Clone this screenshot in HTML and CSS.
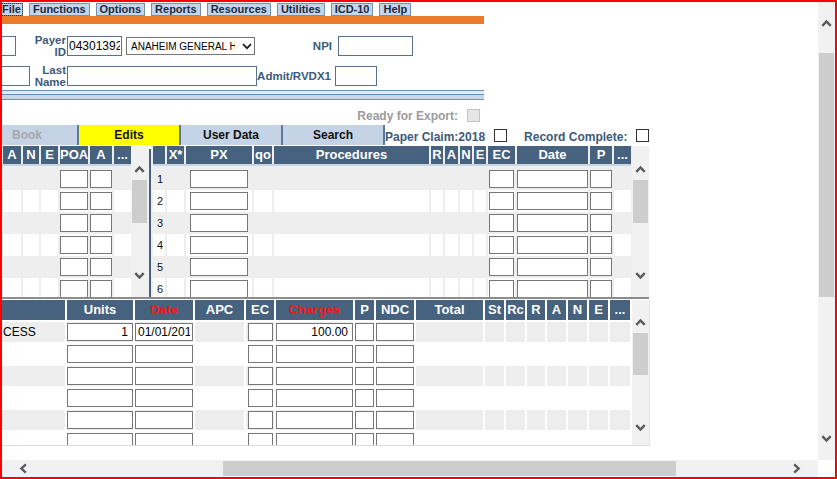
FILE: index.html
```html
<!DOCTYPE html>
<html lang="en">
<head>
<meta charset="utf-8">
<title>Claim Edit</title>
<link rel="stylesheet" href="styles.css">
</head>
<body>
<div class="frame">
  <main class="content">
    <nav class="menu">
      <span class="mbtn file">File</span>
      <span class="mbtn">Functions</span>
      <span class="mbtn">Options</span>
      <span class="mbtn">Reports</span>
      <span class="mbtn">Resources</span>
      <span class="mbtn">Utilities</span>
      <span class="mbtn">ICD-10</span>
      <span class="mbtn">Help</span>
    </nav>
    <div class="orange"></div>

    <div class="frow r1">
      <input class="inp frag1" type="text">
      <label class="lbl l-payer">Payer<br>ID</label>
      <input class="inp payer" type="text" value="04301392">
      <div class="sel">
        <span class="sel-text">ANAHEIM GENERAL H</span>
        <svg class="sel-chev" width="10" height="7" viewBox="0 0 10 7"><path d="M1 1.2 L5 5.2 L9 1.2" fill="none" stroke="#1a1a1a" stroke-width="1.7"/></svg>
      </div>
      <label class="lbl l-npi">NPI</label>
      <input class="inp npi" type="text">
    </div>

    <div class="frow r2">
      <input class="inp frag2" type="text">
      <label class="lbl l-last">Last<br>Name</label>
      <input class="inp lastname" type="text">
      <label class="lbl l-admit">Admit/RVDX1</label>
      <input class="inp admit" type="text">
    </div>

    <div class="rules"></div>

    <div class="ready">
      <span>Ready for Export:</span>
      <input class="cb cb-dis" type="checkbox" disabled>
    </div>

    <div class="tabrow">
      <div class="tabs">
        <span class="tab book">Book</span>
        <span class="tab edits">Edits</span>
        <span class="tab">User Data</span>
        <span class="tab">Search</span>
      </div>
      <span class="plbl">Paper Claim:2018</span>
      <input class="cb cb-paper" type="checkbox">
      <span class="plbl rc">Record Complete:</span>
      <input class="cb cb-rc" type="checkbox">
    </div>

    <section class="upper">
      <div class="blk blk-left">
        <div class="hrow gl">
          <div class="hc">A</div><div class="hc">N</div><div class="hc">E</div><div class="hc">POA</div><div class="hc">A</div><div class="hc">...</div>
        </div>
        <div class="rows">
          <div class="grow gl"><div class="c"></div><div class="c"></div><div class="c"></div><div class="c"><input class="ti"></div><div class="c"><input class="ti"></div><div class="c"></div></div>
          <div class="grow gl w"><div class="c"></div><div class="c"></div><div class="c"></div><div class="c"><input class="ti"></div><div class="c"><input class="ti"></div><div class="c"></div></div>
          <div class="grow gl"><div class="c"></div><div class="c"></div><div class="c"></div><div class="c"><input class="ti"></div><div class="c"><input class="ti"></div><div class="c"></div></div>
          <div class="grow gl w"><div class="c"></div><div class="c"></div><div class="c"></div><div class="c"><input class="ti"></div><div class="c"><input class="ti"></div><div class="c"></div></div>
          <div class="grow gl"><div class="c"></div><div class="c"></div><div class="c"></div><div class="c"><input class="ti"></div><div class="c"><input class="ti"></div><div class="c"></div></div>
          <div class="grow gl w"><div class="c"></div><div class="c"></div><div class="c"></div><div class="c"><input class="ti"></div><div class="c"><input class="ti"></div><div class="c"></div></div>
        </div>
      </div>
      <div class="iscroll up-scroll">
        <span class="arrow"><svg width="11" height="8" viewBox="0 0 11 8"><path d="M1.3 6.8 L5.5 2.4 L9.7 6.8" fill="none" stroke="#5a5a5a" stroke-width="2.4"/></svg></span>
        <span class="ithumb"></span>
        <span class="arrow down"><svg width="11" height="8" viewBox="0 0 11 8"><path d="M1.3 1.2 L5.5 5.6 L9.7 1.2" fill="none" stroke="#5a5a5a" stroke-width="2.4"/></svg></span>
      </div>
      <div class="vdiv"></div>
      <div class="blk blk-right">
        <div class="hrow gr">
          <div class="hc"></div><div class="hc">X*</div><div class="hc">PX</div><div class="hc">qo</div><div class="hc">Procedures</div><div class="hc">R</div><div class="hc">A</div><div class="hc">N</div><div class="hc">E</div><div class="hc">EC</div><div class="hc">Date</div><div class="hc">P</div><div class="hc">...</div>
        </div>
        <div class="rows">
          <div class="grow gr"><div class="c num">1</div><div class="c"></div><div class="c"><input class="ti px"></div><div class="c"></div><div class="c"></div><div class="c"></div><div class="c"></div><div class="c"></div><div class="c"></div><div class="c"><input class="ti ec"></div><div class="c"><input class="ti"></div><div class="c"><input class="ti"></div><div class="c"></div></div>
          <div class="grow gr w"><div class="c num">2</div><div class="c"></div><div class="c"><input class="ti px"></div><div class="c"></div><div class="c"></div><div class="c"></div><div class="c"></div><div class="c"></div><div class="c"></div><div class="c"><input class="ti ec"></div><div class="c"><input class="ti"></div><div class="c"><input class="ti"></div><div class="c"></div></div>
          <div class="grow gr"><div class="c num">3</div><div class="c"></div><div class="c"><input class="ti px"></div><div class="c"></div><div class="c"></div><div class="c"></div><div class="c"></div><div class="c"></div><div class="c"></div><div class="c"><input class="ti ec"></div><div class="c"><input class="ti"></div><div class="c"><input class="ti"></div><div class="c"></div></div>
          <div class="grow gr w"><div class="c num">4</div><div class="c"></div><div class="c"><input class="ti px"></div><div class="c"></div><div class="c"></div><div class="c"></div><div class="c"></div><div class="c"></div><div class="c"></div><div class="c"><input class="ti ec"></div><div class="c"><input class="ti"></div><div class="c"><input class="ti"></div><div class="c"></div></div>
          <div class="grow gr"><div class="c num">5</div><div class="c"></div><div class="c"><input class="ti px"></div><div class="c"></div><div class="c"></div><div class="c"></div><div class="c"></div><div class="c"></div><div class="c"></div><div class="c"><input class="ti ec"></div><div class="c"><input class="ti"></div><div class="c"><input class="ti"></div><div class="c"></div></div>
          <div class="grow gr w"><div class="c num">6</div><div class="c"></div><div class="c"><input class="ti px"></div><div class="c"></div><div class="c"></div><div class="c"></div><div class="c"></div><div class="c"></div><div class="c"></div><div class="c"><input class="ti ec"></div><div class="c"><input class="ti"></div><div class="c"><input class="ti"></div><div class="c"></div></div>
        </div>
      </div>
      <div class="iscroll up-scroll">
        <span class="arrow"><svg width="11" height="8" viewBox="0 0 11 8"><path d="M1.3 6.8 L5.5 2.4 L9.7 6.8" fill="none" stroke="#5a5a5a" stroke-width="2.4"/></svg></span>
        <span class="ithumb"></span>
        <span class="arrow down"><svg width="11" height="8" viewBox="0 0 11 8"><path d="M1.3 1.2 L5.5 5.6 L9.7 1.2" fill="none" stroke="#5a5a5a" stroke-width="2.4"/></svg></span>
      </div>
    </section>

    <section class="lower">
      <div class="lblk">
        <div class="lrow">
          <div class="hc"></div><div class="hc">Units</div><div class="hc red">Date</div><div class="hc">APC</div><div class="hc">EC</div><div class="hc red">Charges</div><div class="hc">P</div><div class="hc">NDC</div><div class="hc">Total</div><div class="hc">St</div><div class="hc">Rc</div><div class="hc">R</div><div class="hc">A</div><div class="hc">N</div><div class="hc">E</div><div class="hc">...</div>
        </div>
        <div class="lrow g"><div class="c txt">CESS</div><div class="c"><input class="ti rt" value="1"></div><div class="c"><input class="ti lt" value="01/01/2018"></div><div class="c"></div><div class="c"><input class="ti ec"></div><div class="c"><input class="ti rt" value="100.00"></div><div class="c"><input class="ti"></div><div class="c"><input class="ti"></div><div class="c"></div><div class="c"></div><div class="c"></div><div class="c"></div><div class="c"></div><div class="c"></div><div class="c"></div><div class="c"></div></div>
        <div class="lrow"><div class="c"></div><div class="c"><input class="ti"></div><div class="c"><input class="ti"></div><div class="c"></div><div class="c"><input class="ti ec"></div><div class="c"><input class="ti"></div><div class="c"><input class="ti"></div><div class="c"><input class="ti"></div><div class="c"></div><div class="c"></div><div class="c"></div><div class="c"></div><div class="c"></div><div class="c"></div><div class="c"></div><div class="c"></div></div>
        <div class="lrow g"><div class="c"></div><div class="c"><input class="ti"></div><div class="c"><input class="ti"></div><div class="c"></div><div class="c"><input class="ti ec"></div><div class="c"><input class="ti"></div><div class="c"><input class="ti"></div><div class="c"><input class="ti"></div><div class="c"></div><div class="c"></div><div class="c"></div><div class="c"></div><div class="c"></div><div class="c"></div><div class="c"></div><div class="c"></div></div>
        <div class="lrow"><div class="c"></div><div class="c"><input class="ti"></div><div class="c"><input class="ti"></div><div class="c"></div><div class="c"><input class="ti ec"></div><div class="c"><input class="ti"></div><div class="c"><input class="ti"></div><div class="c"><input class="ti"></div><div class="c"></div><div class="c"></div><div class="c"></div><div class="c"></div><div class="c"></div><div class="c"></div><div class="c"></div><div class="c"></div></div>
        <div class="lrow g"><div class="c"></div><div class="c"><input class="ti"></div><div class="c"><input class="ti"></div><div class="c"></div><div class="c"><input class="ti ec"></div><div class="c"><input class="ti"></div><div class="c"><input class="ti"></div><div class="c"><input class="ti"></div><div class="c"></div><div class="c"></div><div class="c"></div><div class="c"></div><div class="c"></div><div class="c"></div><div class="c"></div><div class="c"></div></div>
        <div class="lrow"><div class="c"></div><div class="c"><input class="ti"></div><div class="c"><input class="ti"></div><div class="c"></div><div class="c"><input class="ti ec"></div><div class="c"><input class="ti"></div><div class="c"><input class="ti"></div><div class="c"><input class="ti"></div><div class="c"></div><div class="c"></div><div class="c"></div><div class="c"></div><div class="c"></div><div class="c"></div><div class="c"></div><div class="c"></div></div>
      </div>
      <div class="iscroll low-scroll">
        <span class="arrow"><svg width="11" height="8" viewBox="0 0 11 8"><path d="M1.3 6.8 L5.5 2.4 L9.7 6.8" fill="none" stroke="#5a5a5a" stroke-width="2.4"/></svg></span>
        <span class="ithumb"></span>
        <span class="arrow down"><svg width="11" height="8" viewBox="0 0 11 8"><path d="M1.3 1.2 L5.5 5.6 L9.7 1.2" fill="none" stroke="#5a5a5a" stroke-width="2.4"/></svg></span>
      </div>
    </section>
  </main>

  <div class="vscroll">
    <span class="arrow"><svg width="11" height="8" viewBox="0 0 11 8"><path d="M1.3 6.8 L5.5 2.4 L9.7 6.8" fill="none" stroke="#5a5a5a" stroke-width="2.4"/></svg></span>
    <span class="vthumb"></span>
    <span class="arrow down"><svg width="11" height="8" viewBox="0 0 11 8"><path d="M1.3 1.2 L5.5 5.6 L9.7 1.2" fill="none" stroke="#5a5a5a" stroke-width="2.4"/></svg></span>
  </div>
  <div class="hscroll">
    <span class="arrow"><svg width="8" height="11" viewBox="0 0 8 11"><path d="M6.8 1.3 L2.4 5.5 L6.8 9.7" fill="none" stroke="#5a5a5a" stroke-width="2.4"/></svg></span>
    <span class="hthumb"></span>
    <span class="arrow right"><svg width="8" height="11" viewBox="0 0 8 11"><path d="M1.2 1.3 L5.6 5.5 L1.2 9.7" fill="none" stroke="#5a5a5a" stroke-width="2.4"/></svg></span>
  </div>
  <div class="corner"></div>
</div>
</body>
</html>
```

FILE: styles.css
```css
* { box-sizing: border-box; }
html, body { margin: 0; padding: 0; }
body {
  width: 837px; height: 479px; overflow: hidden; background: #fff;
  font-family: "Liberation Sans", Arial, sans-serif; color: #000;
}
.frame {
  width: 837px; height: 479px; border: 2px solid #ff0000;
  display: grid; grid-template-columns: 816px 17px; grid-template-rows: 458px 17px;
}
.content { overflow: hidden; background: #fff; }

/* menu */
.menu { display: flex; gap: 6px; height: 14px; padding-top: 1px; }
.mbtn {
  display: block; height: 13px; padding: 0 3px; border: 1px solid #7191b1;
  background: #c6d6ea; color: #1b2a3e; font-size: 11px; font-weight: bold;
  line-height: 11px; white-space: nowrap;
}
.mbtn.file { margin-left: -2px; padding: 0 1px; outline: 1px dotted #333; outline-offset: -1px; }
.orange { width: 482px; height: 8px; background: #ea7b28; }

/* header form */
.frow { display: flex; align-items: center; height: 20px; }
.r1 { margin-top: 12px; }
.r2 { margin-top: 10px; }
.inp {
  display: block; height: 20px; margin: 0; padding: 0 1px; border: 1px solid #56728f;
  border-radius: 0; background: #fff; font: 12px "Liberation Sans", Arial, sans-serif;
  color: #000; outline: none;
}
.lbl { font-weight: bold; font-size: 11.5px; line-height: 12px; color: #3c5a7a; white-space: nowrap; }
.frag1 { width: 14px; border-left: 0; }
.l-payer { width: 50px; text-align: right; }
.payer { width: 55px; margin-left: 1px; }
.sel {
  display: flex; align-items: center; width: 129px; height: 18px; margin-left: 4px;
  padding-left: 4px; border: 1px solid #767676; background: #fff; font-size: 10px; color: #000;
}
.sel-text { width: 104px; overflow: hidden; white-space: nowrap; }
.sel-chev { margin-left: auto; margin-right: 2px; }
.l-npi { width: 83px; text-align: right; padding-right: 6px; }
.npi { width: 75px; }
.frag2 { width: 28px; border-left: 0; }
.l-last { width: 36px; text-align: right; }
.lastname { width: 190px; margin-left: 1px; }
.l-admit { width: 78px; text-align: right; padding-right: 4px; }
.admit { width: 42px; }

.rules {
  width: 482px; height: 10px; margin-top: 4px;
  background: linear-gradient(to bottom, #6f8fb1 0 1px, #e2e9f2 1px 4px, #6f8fb1 4px 5px, #c8d6e6 5px 9px, #6f8fb1 9px 10px);
}

.ready {
  width: 482px; height: 13px; margin-top: 9px; padding-right: 4px;
  display: flex; justify-content: flex-end; align-items: center; gap: 9px;
  font-size: 12px; font-weight: bold; color: #9b9b9b;
}
.cb {
  appearance: none; -webkit-appearance: none; display: block; width: 13px; height: 13px; margin: 0;
  border: 1px solid #333; background: #fff; border-radius: 0;
}
.cb-dis { border-color: #c4c4c4; background: #e6e6e6; }

/* tabs */
.tabrow { display: flex; align-items: center; height: 20px; margin-top: 3px; }
.tabs { display: flex; height: 20px; }
.tab {
  display: block; width: 102px; height: 20px; border-right: 2px solid #5b7a98;
  background: #c5d3e6; font-size: 12px; font-weight: bold; line-height: 20px;
  text-align: center; color: #111; white-space: nowrap;
}
.tab.book { margin-left: -25px; color: #a7a7a7; }
.tab.edits { background: #ffff00; }
.plbl { font-size: 12px; font-weight: bold; color: #3c5a7a; padding-top: 3px; white-space: nowrap; }
.cb-paper { margin-left: 9px; }
.plbl.rc { margin-left: 17px; }
.cb-rc { margin-left: 9px; }

/* upper grids */
.upper {
  display: flex; width: 647px; height: 153px; margin-top: 1px;
  border-bottom: 2px solid #8c8c8c; overflow: hidden;
}
.blk { background: #eeeeee; overflow: hidden; }
.blk-left { width: 129px; flex-shrink: 0; }
.blk-right { width: 481px; flex-shrink: 0; padding-left: 2px; padding-right: 1px; }
.vdiv { width: 3px; flex-shrink: 0; background: #46627f; border-left: 1px solid #f1f1f1; margin-top: 3px; }
.gl { display: grid; grid-template-columns: 18px 16px 17px 28px 22px 17px; column-gap: 2px; padding-left: 1px; }
.gr { display: grid; grid-template-columns: 12px 17px 66px 18px 155px 12px 13px 12px 12px 27px 71px 22px 17px; column-gap: 2px; }
.hrow { height: 20px; border-bottom: 2px solid #c8d5e3; }
.hc {
  background: #46627f; color: #fff; font-size: 13px; font-weight: bold;
  text-align: center; line-height: 18px; height: 18px; overflow: hidden; white-space: nowrap;
}
.rows { padding-top: 2px; }
.grow { height: 22px; }
.c { display: flex; align-items: center; justify-content: center; min-width: 0; overflow: hidden; }
.grow.w .c { background: #fff; }
.num { justify-content: flex-start; padding-left: 4px; font-size: 11px; color: #111; }
.ti {
  display: block; width: 100%; height: 18px; margin: 0; padding: 0 2px;
  border: 1px solid #767676; border-radius: 0; background: #fff;
  font: 12px "Liberation Sans", Arial, sans-serif; color: #000; outline: none;
}
.ti.px { width: 58px; }
.ti.ec { width: 25px; }
.ti.rt { text-align: right; padding-right: 4px; }
.ti.lt { padding-left: 2px; }

/* inner scrollbars */
.iscroll {
  width: 17px; flex-shrink: 0; background: #f1f1f1;
  display: flex; flex-direction: column; align-items: center;
}
.up-scroll { padding-top: 14px; }
.up-scroll .down { margin-top: auto; margin-bottom: 13px; }
.low-scroll { padding-top: 13px; border-right: 1px solid #e2e2e2; width: 18px; }
.low-scroll .down { margin-top: auto; margin-bottom: 9px; }
.arrow { display: flex; align-items: center; justify-content: center; width: 17px; height: 17px; flex-shrink: 0; }
.ithumb { display: block; width: 15px; height: 43px; margin-top: 3px; background: #cdcdcd; }
.low-scroll .ithumb { height: 42px; }

/* lower grid */
.lower {
  display: flex; width: 648px; height: 146px; margin-top: 1px;
  border-bottom: 1px solid #dcdcdc; overflow: hidden;
}
.lblk { width: 630px; flex-shrink: 0; display: flex; flex-direction: column; row-gap: 2px; overflow: hidden; }
.lrow {
  display: grid; flex-shrink: 0; height: 20px; column-gap: 2px;
  grid-template-columns: 63px 66px 58px 49px 28px 77px 19px 38px 67px 19px 19px 18px 19px 19px 19px 20px;
}
.lrow .hc { height: 20px; line-height: 20px; }
.hc.red { color: #f01818; }
.lrow.g .c { background: #ededed; }
.txt { justify-content: flex-start; padding-left: 1px; font-size: 12px; }

/* page scrollbars */
.vscroll {
  background: #f1f1f1; display: flex; flex-direction: column; align-items: center; padding-top: 12px;
}
.vthumb { display: block; width: 15px; height: 244px; margin-top: 22px; background: #cdcdcd; }
.vscroll .down { margin-top: auto; margin-bottom: 13px; }
.hscroll { background: #f1f1f1; display: flex; align-items: center; padding-left: 12px; }
.hthumb { display: block; width: 453px; height: 15px; margin-left: 192px; background: #cdcdcd; }
.hscroll .right { margin-left: auto; margin-right: 13px; }
.corner { background: #fff; }
```
